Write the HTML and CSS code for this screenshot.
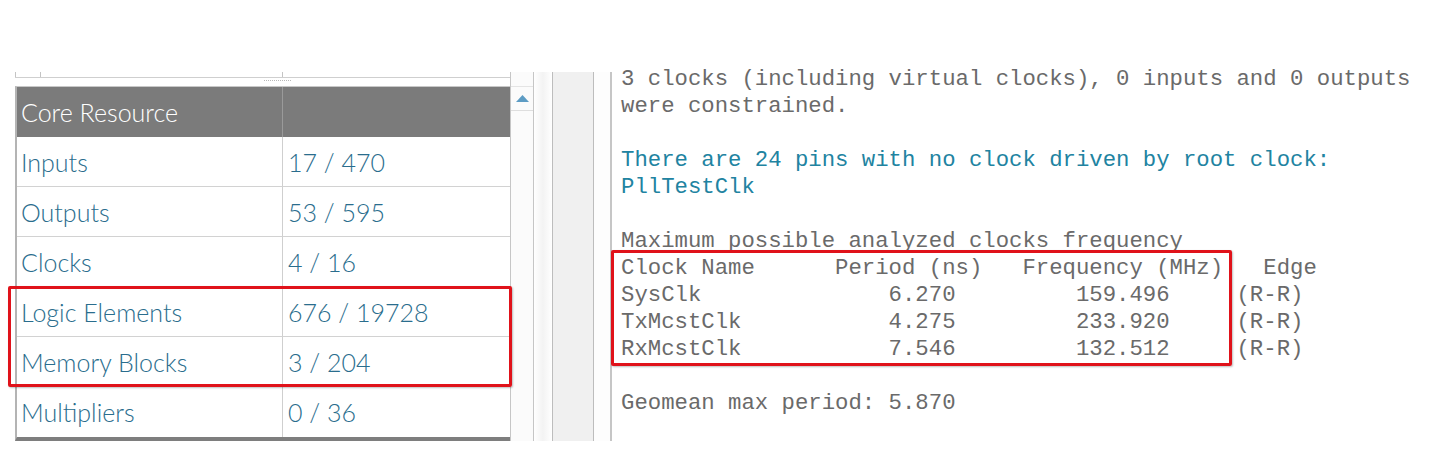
FILE: index.html
```html
<!DOCTYPE html>
<html>
<head>
<meta charset="utf-8">
<link rel="stylesheet" href="styles.css">
</head>
<body>
<div class="page">
  <div class="left">
    <div class="tablecol">
      <div class="strip"><span class="s1"></span><span class="s2"></span><span class="s3"></span></div>
      <div class="grip"><span class="dots"></span></div>
      <div class="res">
        <div class="cell head">Core Resource</div><div class="cell head val"></div>
        <div class="cell">Inputs</div><div class="cell val">17 / 470</div>
        <div class="cell">Outputs</div><div class="cell val">53 / 595</div>
        <div class="cell">Clocks</div><div class="cell val">4 / 16</div>
        <div class="cell">Logic Elements</div><div class="cell val">676 / 19728</div>
        <div class="cell">Memory Blocks</div><div class="cell val">3 / 204</div>
        <div class="cell">Multipliers</div><div class="cell val">0 / 36</div>
      </div>
    </div>
    <div class="vscroll">
      <div class="up"><svg width="13" height="7" viewBox="0 0 13 7"><polygon points="6.5,0 13,7 0,7" fill="#5d9cc4"/></svg></div>
    </div>
    <div class="hl hl-left"></div>
  </div>
  <div class="gutter"></div>
  <div class="splitter"></div>
  <div class="margin"></div>
  <div class="report">
<pre class="log"><span>3 clocks (including virtual clocks), 0 inputs and 0 outputs
were constrained.
</span>
<span class="info">There are 24 pins with no clock driven by root clock:
PllTestClk</span>

<span>Maximum possible analyzed clocks frequency
Clock Name      Period (ns)   Frequency (MHz)   Edge
SysClk              6.270         159.496     (R-R)
TxMcstClk           4.275         233.920     (R-R)
RxMcstClk           7.546         132.512     (R-R)

Geomean max period: 5.870</span></pre>
    <div class="hl hl-right"></div>
  </div>
</div>
</body>
</html>
```

FILE: styles.css
```css
html, body {
  margin: 0;
  padding: 0;
  background: #ffffff;
}

.page {
  display: flex;
  padding-top: 72px;
  height: 370px;
  overflow: hidden;
}

.left {
  position: relative;
  margin-left: 15px;
  display: flex;
  height: 369px;
}

.tablecol {
  width: 495px;
  display: flex;
  flex-direction: column;
}

.strip {
  height: 5px;
  border-bottom: 1px solid #cfcfcf;
  display: grid;
  grid-template-columns: 25px 242px 1fr;
}
.strip span {
  border-left: 1px solid #c4c4c4;
}

.grip {
  height: 8px;
  display: flex;
  justify-content: flex-start;
  padding-left: 249px;
}
.grip .dots {
  width: 27px;
  height: 2px;
  margin-top: 2px;
  border-top: 1px dotted #b9b9b9;
}

.res {
  display: grid;
  grid-template-columns: 265px 228px;
  border-left: 2px solid #b4b4b4;
  border-top: 1px solid #c8c8c8;
  border-bottom: 4px solid #7e7e7e;
}

.cell {
  box-sizing: border-box;
  height: 50px;
  border-bottom: 1px solid #d2d2d2;
  padding-left: 4px;
  display: flex;
  align-items: center;
  font-family: "Lato", "Open Sans", sans-serif;
  font-weight: 300;
  font-size: 25px;
  color: #2a6d8d;
  background: #ffffff;
}
.cell.val {
  border-left: 1px solid #cfcfcf;
  padding-left: 5px;
}
.cell:nth-last-child(-n+2) {
  border-bottom: none;
}
.cell.head {
  background: #7b7b7b;
  color: #ffffff;
  border-bottom: none;
}
.cell.head.val {
  border-left: 1px solid #9a9a9a;
}

.vscroll {
  width: 22px;
  border-left: 1px solid #c6c6c6;
  border-right: 1px solid #c6c6c6;
  background: #fbfbfb;
}
.vscroll .up {
  margin-top: 14px;
  height: 23px;
  border-bottom: 1px solid #dedede;
  border-top: 1px solid #e4e4e4;
  display: flex;
  align-items: center;
  justify-content: center;
}

.gutter {
  width: 18px;
  background: linear-gradient(to right, #ffffff, #f3f3f3 50%, #ffffff);
  height: 369px;
}

.splitter {
  width: 40px;
  height: 369px;
  background: #f0f0f0;
  border-left: 1px solid #bdbdbd;
  border-right: 1px solid #bdbdbd;
}

.margin {
  width: 16px;
  height: 369px;
  background: #fdfdfd;
  border-right: 2px solid #c6c6c6;
}

.report {
  position: relative;
  flex: 1;
  height: 370px;
}

.log {
  margin: -6px 0 0 0;
  padding-left: 9px;
  font-family: "Liberation Mono", "Courier New", monospace;
  font-size: 22.3px;
  line-height: 27px;
  color: #6a6a6a;
  white-space: pre;
}
.log .info {
  color: #2183a1;
}

.hl {
  position: absolute;
  border: 3px solid #e0121a;
  border-radius: 2px;
  box-sizing: border-box;
  box-shadow: 1px 1px 2px rgba(0,0,0,0.25);
}
.hl-left {
  left: -7px;
  top: 214px;
  width: 504px;
  height: 101px;
}
.hl-right {
  left: -1px;
  top: 178px;
  width: 621px;
  height: 116px;
}
```
